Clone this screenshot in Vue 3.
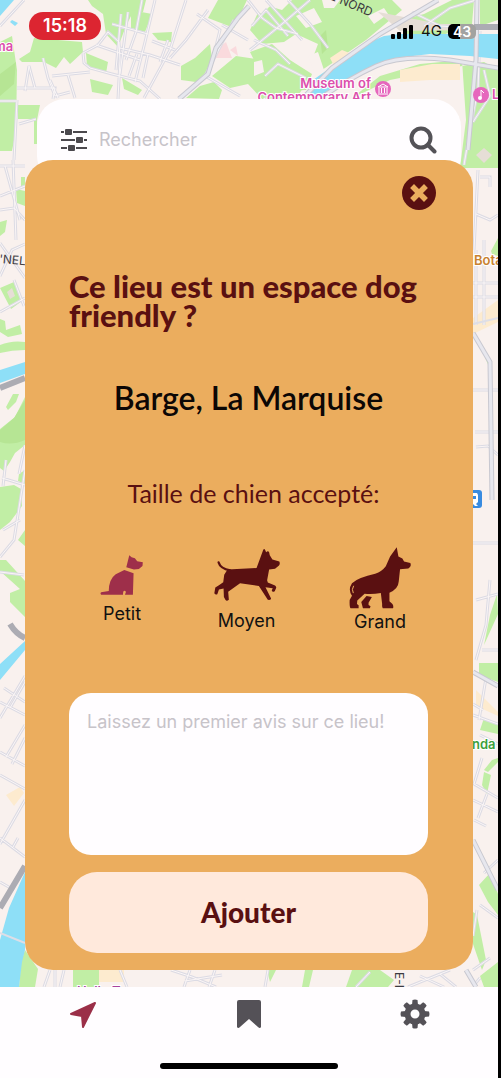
<script setup>
import { ref } from 'vue'

const size = ref('petit')
const review = ref('')
const query = ref('')
const teeth = [0, 45, 90, 135, 180, 225, 270, 315]

const parks = [
  'M88 0H146L143 12 132 14 126 26 118 47 106 34 103 14 92 6Z',
  'M34 38 82 42 83 52 70 64 64 57 56 68 44 62 22 62 19 59 30 52Z',
  'M0 42 12 36 17 70 16 130 12 151H0Z',
  'M18 105H40L37 120V144L34 144V119H18Z',
  'M86 53 108 62 106 73 87 66Z',
  'M90 79 113 85 108 95 92 92Z',
  'M122 78 142 90 138 95 124 89Z',
  'M131 10 152 14 145 32 131 28Z',
  'M152 33 172 32 171 42 158 40Z',
  'M195 58 210 44 213 66 196 82 181 80V66Z',
  'M186 98 200 86 214 82 222 90 219 99Z',
  'M218 0H247L234 28 208 18Z',
  'M212 76 236 56 276 62 308 80 296 99H262L248 84 230 88Z',
  'M250 30 262 4 282 10 292 0H392L402 10 366 40 334 62 322 70 312 60 318 44 296 34 284 42 262 44Z',
  'M250 52 272 44 290 60 312 74 306 90 270 92Z',
  'M402 20 424 14 452 0H474L472 24 440 36 404 38Z',
  'M480 0H498V20L480 26Z',
  'M352 98 380 76 420 64 462 60 466 120 460 168 498 168V70L484 62 440 70 390 80Z',
  'M16 189 25 191V206L17 203Z M21 177 25 177V187L21 186Z',
  'M0 222 7 220 5 232 0 236Z M0 288 14 282 22 301 11 309Z',
  'M0 319 5 321 6 330 20 325 22 334 8 337 0 332Z',
  'M0 345Q12 340 25 342V350Q12 350 0 353Z',
  'M6 407 13 394 19 394 16 402 8 410Z',
  'M0 429 15 417 25 397V445L15 453 10 462 4 471 0 468Z',
  'M0 487 14 485 21 489 22 506 10 522 0 530Z M19 474 25 470V484L18 481Z M18 540 25 530V546Z',
  'M0 560H6L25 581V617L10 602 10 593 20 589 0 571Z',
  'M21 962 25 950 38 969 35 987H19Z',
  'M73 970H99V987H73Z M267 970H276L270 982Z M305 970H313L309 987H302Z',
  'M352 970H380L394 980 388 987H346Z',
  'M491 251 498 238V256L492 254Z M480 345 489 360V367Z',
  'M484 645 490 615 497 594 498 614Z M479 663H498V682L479 675Z',
  'M480 730 484 718 498 724V734Z M482 785 484 772 491 775 487 794Z M484 770 492 760 498 758V762L488 772Z',
  'M479 885 490 873 498 894V915L488 902Z M473 912 477 915 486 960 482 970 473 944Z M480 976 498 962V987H484Z',
]

const streets = [
  'M0 26 24 0M17 88H55L53 99M17 100 14 160M0 101H16M19 124 36 119M25 91 29 66 35 88M43 58 48 78 55 96 70 92M52 76 90 72M50 80 58 98M68 75 75 98',
  'M83 53 98 45 108 32 119 42 120 60 118 99M83 53 84 63 90 68 112 74 140 81 160 99M96 45 140 60M121 14 116 70M128 12 120 74M112 24 148 34M142 0 136 32 126 60M155 0 145 42 135 82M168 40 160 62M186 0 170 50 144 98',
  'M120 48 150 55 180 65M137 54 129 76M148 54 143 78M152 41 175 50M208 10 186 40 170 58M197 14 220 30 210 70M234 20 205 76 240 96M222 25 248 40',
  'M248 0 262 18 276 28 298 34M252 26 266 10 288 36M266 0 302 40M250 50 282 24 310 0M288 0 310 24 328 48M254 40 276 50 290 64M265 76 278 64 306 78',
  'M412 12 440 26 470 28M424 26 450 8 476 0M480 31 478 90 470 130 464 165M484 70 490 96 473 122',
  'M0 166H25M5 166 20 220M0 196 25 186M0 210 14 208 25 220M13 160 16 240M0 243 25 278M0 276 12 250 25 244M0 312 25 298M14 280 24 306',
  'M2 478 25 485M6 460 3 486M25 445 19 474M25 470 14 540 0 557M3 530 20 520',
  'M0 572 24 575M0 718 25 676M4 688 25 702M0 702 25 715M10 708 25 682M0 752 25 766M0 775 25 789M6 757 25 725M12 764 25 738M0 844 25 800M0 838 25 857M13 847 18 838M0 882 14 890',
  'M50 970 44 987M55 970V987M64 970 60 987M120 970 127 987M171 970 192 977 216 987M190 970 184 987M215 970 209 987M185 981 222 975M268 970 265 987M356 987 370 972M408 987 450 970M420 976 444 987M440 974 456 987',
  'M478 170 476 210 474 250M480 177H490V187M476 214 490 220 498 215M473 283H498M476 250V325M484 240V325M473 297H498M473 390H498M475 432H498M476 447 488 446 498 455M473 543H498',
  'M476 600 498 594M476 660 486 625 490 580M482 650H498M473 704 483 710M486 678 479 720M473 715 498 724M480 735 498 744M482 758 474 784 498 798M487 794 478 818M473 800 498 812M474 820 486 826M484 873 498 860M480 905 498 918M473 936 477 910M473 970 490 958M474 985 480 978',
]
</script>

<template>
  <div class="screen">
    <main class="stage">
      <svg class="map" viewBox="0 0 498 987" preserveAspectRatio="xMidYMin slice" aria-hidden="true">
        <rect class="land" width="498" height="987" />
        <path v-for="(d, i) in parks" :key="i" class="park" :d="d" />
        <path class="land" d="M256 0 276 0 262 14 252 10ZM296 16 314 8 322 22 306 28ZM322 0H340L334 8 324 8ZM308 56 318 52 324 70 316 76ZM254 62 262 60 264 72 254 76ZM368 16 384 8 388 14 374 24Z" />
        <path class="sand" d="M330 58 342 50 352 54 334 66ZM400 70 432 64 460 64V80L430 80 400 82ZM473 318 498 300V322L473 334ZM6 795 20 787 24 793 14 806ZM99 970H124V982H99ZM476 690 498 712V716L476 706Z" />
        <path class="blush" d="M218 48 226 42 232 58 214 58ZM230 50 236 46 238 56Z" />
        <path class="grove" d="M0 430 14 418 25 400V440Q12 446 0 442ZM0 74 16 62 14 84 0 96ZM320 36 326 30 328 48 322 54Z" />
        <path class="building" d="M476 155 484 148 492 155 484 163ZM7 292 12 288 15 296 10 299ZM378 12 440 24 470 24 470 30 400 31Z" />
        <path class="casing" :d="streets.join('')" />
        <path class="street" :d="streets.join('')" />
        <path class="water" d="M305 97 313 80 330 68 367 43 384 36 400 34H498V59L470 56 430 54 396 58 368 68 340 87 326 97Z" />
        <path class="water" d="M0 0H14L0 16ZM12 20 18 23 15 26 10 22ZM0 370 25 362V374L0 383ZM0 664 25 641V650L0 680ZM25 872 9 908 0 940V987H19L22 962 25 950Z" />
        <path class="major-edge" d="M306 95 332 68 380 34 438 0M322 97Q350 78 376 66T450 60L498 68M477 0 476 60 468 150M179 99 208 74 216 48 238 18 249 6M473 333 490 362 492 500M473 672 498 686M473 840 498 890M466 970 476 987" />
        <path class="major" d="M306 95 332 68 380 34 438 0M322 97Q350 78 376 66T450 60L498 68M477 0 476 60 468 150M179 99 208 74 216 48 238 18 249 6M473 333 490 362 492 500M473 672 498 686M473 840 498 890M466 970 476 987" />
        <path class="rail" d="M0 388 25 378M10 624Q16 634 25 638M0 908 25 866M474 27H498" />
        <path class="tram" d="M0 933 25 943M473 324 498 318" />
        <g class="place pink">
          <text x="371" y="88" text-anchor="end">Museum of</text>
          <text x="371" y="102" text-anchor="end">Contemporary Art</text>
          <text x="-6" y="51">ma</text>
          <text x="492" y="99">L</text>
          <text class="purple" x="77" y="996">Halle Tony</text>
        </g>
        <text class="place orange" x="474" y="265">Bota</text>
        <text class="place green" x="472" y="749">nda</text>
        <g class="road-name">
          <text transform="translate(329 -1) rotate(23)">E NORD</text>
          <text transform="translate(-1 263) rotate(5)">'NEL</text>
          <text transform="translate(395 972) rotate(90)">E-D</text>
        </g>
        <circle class="pin" cx="383" cy="89" r="8" />
        <path class="pin-mark" d="M378 87 383 84 388 87ZM379 88V93M381.500 88V93M384.500 88V93M387 88V93M378 94H388" />
        <circle class="pin" cx="481" cy="95" r="8" />
        <path class="pin-mark" d="M481 98V90L484 93" />
        <circle cx="480" cy="98" r="2" fill="#fff" />
        <rect x="465" y="490" width="17" height="18" rx="3" fill="#388be0" />
        <path d="M470 493H477L478 495V502L476 504 478 506H475L473 504H470Z" fill="#fff" />
        <path d="M471 496H476V499H471ZM475 501H477" fill="#388be0" />
      </svg>

      <header class="status">
        <time class="clock">15:18</time>
        <div class="signals">
          <svg width="24" height="15" viewBox="0 0 24 15" aria-label="Réseau">
            <rect x="0" y="10" width="4" height="5" rx="1" />
            <rect x="6" y="8" width="4" height="7" rx="1" />
            <rect x="12" y="4" width="4" height="11" rx="1" />
            <rect x="18" y="1" width="4" height="14" rx="1" />
          </svg>
          <span class="network">4G</span>
          <span class="battery">43</span>
        </div>
      </header>

      <form class="search" @submit.prevent>
        <button type="button" class="plain" aria-label="Filtres">
          <svg width="26" height="26" viewBox="0 0 26 26" fill="#4b484d">
            <path d="M0 4H26V6H0ZM0 12H26V14H0ZM0 20H26V22H0Z" />
            <path d="M3 1H12V9H3ZM14 9H23V17H14ZM6 17H15V25H6Z" fill="#fffdff" />
            <rect x="4" y="2" width="7" height="6" rx="1" />
            <rect x="15" y="10" width="7" height="6" rx="1" />
            <rect x="7" y="18" width="7" height="6" rx="1" />
          </svg>
        </button>
        <input v-model="query" type="search" placeholder="Rechercher" aria-label="Rechercher" />
        <button type="submit" class="plain" aria-label="Lancer la recherche">
          <svg width="28" height="28" viewBox="0 0 28 28" fill="none" stroke="#545257" stroke-width="4" stroke-linecap="round">
            <circle cx="12" cy="12" r="9.500" />
            <path d="M19 19 25.500 25.500" />
          </svg>
        </button>
      </form>

      <section class="sheet" role="dialog" aria-labelledby="question">
        <button type="button" class="plain close" aria-label="Fermer">
          <svg width="34" height="34" viewBox="0 0 34 34">
            <circle cx="17" cy="17" r="17" fill="#5a1011" />
            <path d="M12 12 22 22M22 12 12 22" stroke="#ebad5e" stroke-width="5.500" stroke-linecap="square" />
          </svg>
        </button>
        <h1 id="question">Ce lieu est un espace dog friendly ?</h1>
        <h2>Barge, La Marquise</h2>
        <fieldset>
          <legend>Taille de chien accepté:</legend>
          <div class="sizes">
            <label class="size">
              <input v-model="size" type="radio" name="size" value="petit" />
              <svg width="44" height="40" viewBox="48 47 132 121">
                <path d="M136 48 143 54 153 57 160 66 177 69 176 80 165 89 150 91 127 84 130 72ZM121 92 149 102 147 167H123L126 158Q117 149 117 167H51Q47 163 51 160L74 156Q74 120 95 105Z" />
              </svg>
              <span>Petit</span>
            </label>
            <label class="size">
              <input v-model="size" type="radio" name="size" value="moyen" />
              <svg width="66" height="54" viewBox="29 31 200 160">
                <path d="M70 94 158 90 178 35Q181 30 184 35L187 42Q193 36 196 42L198 51 206 64 227 70Q230 78 226 82L214 92 196 94 190 127 192 134 214 143Q219 147 217 151L213 160Q206 164 204 158L207 151 185 148 202 182Q202 188 192 186L165 144 108 136 72 162 74 186Q68 191 64 187L59 178 58 152 44 155 39 169Q34 173 30 166L33 149 44 142 57 133 60 110Z" />
                <path d="M43 73Q48 91 78 97" fill="none" stroke="#5a1011" stroke-width="7" stroke-linecap="round" />
              </svg>
              <span>Moyen</span>
            </label>
            <label class="size tall">
              <input v-model="size" type="radio" name="size" value="grand" />
              <svg width="62" height="62" viewBox="431 16 187 187">
                <path d="M575 17 580 45 592 51 597 60 616 64Q619 72 615 76L610 81 585 83 581 120Q580 142 553 154V180L562 188Q566 194 564 201H533Q530 196 531 188L527 155Q500 160 478 157L456 177 455 188 460 192V201H436Q432 198 433 176L440 163Q427 145 440 125 460 108 510 97 530 90 542 74L555 45ZM484 164 500 167 490 184V191L496 195 494 201H473L468 182Z" />
                <path d="M445 133Q438 144 444 155" fill="none" stroke="#ebad5e" stroke-width="3" />
              </svg>
              <span>Grand</span>
            </label>
          </div>
        </fieldset>
        <textarea v-model="review" placeholder="Laissez un premier avis sur ce lieu!" aria-label="Votre avis"></textarea>
        <button type="button" class="add">Ajouter</button>
      </section>
    </main>

    <nav class="tabs">
      <a href="#carte" aria-label="Carte" aria-current="page">
        <svg width="30" height="30" viewBox="0 0 30 30" fill="#9b2f48" stroke="#9b2f48" stroke-width="2" stroke-linejoin="round">
          <path d="M27 4 15 28 14 17 3 15Z" />
        </svg>
      </a>
      <a href="#favoris" aria-label="Favoris">
        <svg width="30" height="30" viewBox="0 0 30 30" fill="#545157">
          <path d="M5 1H25Q27 1 27 3V28Q26 30 24 28L15 20 6 28Q4 30 3 28V3Q3 1 5 1Z" />
        </svg>
      </a>
      <a href="#reglages" aria-label="Réglages">
        <svg width="30" height="30" viewBox="0 0 30 30" fill="#545157">
          <path v-for="a in teeth" :key="a" d="M12 6 12.500 1Q15 0 17.500 1L18 6Z" :transform="`rotate(${a} 15 15)`" />
          <circle cx="15" cy="15" r="7.500" fill="none" stroke="#545157" stroke-width="6" />
        </svg>
      </a>
      <span class="home-bar"></span>
    </nav>
  </div>
</template>

<style>
html,
body {
  background: #000;
}
</style>

<style scoped>
* {
  box-sizing: border-box;
}
.screen {
  min-height: 100vh;
  display: flex;
  flex-direction: column;
  border-right: 3px solid #000;
  font-family: Inter, "Liberation Sans", sans-serif;
  color: #111;
}
.stage {
  position: relative;
  flex: 1;
  display: flex;
  flex-direction: column;
  overflow: hidden;
  padding-bottom: 17px;
}
.map {
  position: absolute;
  inset: 0;
  width: 100%;
  height: 100%;
}
.land { fill: #f9f1ee; }
.sand { fill: #fdebcf; }
.blush { fill: #fadadd; }
.park { fill: #c1eea5; }
.grove { fill: #b6e594; }
.building { fill: #e6ded6; }
.water { fill: #8edff7; }
.casing, .street, .major-edge, .major, .rail, .tram { fill: none; }
.casing { stroke: #dcdbe4; stroke-width: 3; }
.street { stroke: #fbf6f6; stroke-width: 1; }
.major-edge { stroke: #c8c8d0; stroke-width: 5; }
.major { stroke: #e7e7ee; stroke-width: 3; }
.rail { stroke: #acacb3; stroke-width: 6; }
.tram { stroke: #dedee6; stroke-width: 2; }
.place {
  font-size: 13px;
  font-weight: 600;
  stroke: #fff;
  stroke-width: 2px;
  paint-order: stroke;
}
.pink { fill: #dc4fac; }
.purple { fill: #a8439c; }
.orange { fill: #c9822f; }
.green { fill: #3ba03c; }
.road-name { font-size: 12px; fill: #3c3a40; }
.pin { fill: #e667bd; }
.pin-mark { fill: none; stroke: #fff; stroke-width: 1; }

.status {
  position: relative;
  display: flex;
  justify-content: space-between;
  align-items: flex-start;
  height: 99px;
  padding: 12px 22px 0 29px;
}
.clock {
  width: 72px;
  border-radius: 14px;
  background: #dc2531;
  color: #fff;
  font-size: 18px;
  font-weight: 600;
  line-height: 28px;
  text-align: center;
}
.signals {
  display: flex;
  align-items: center;
  gap: 6px;
  padding-top: 9px;
}
.network {
  font-size: 15px;
  line-height: 20px;
}
.battery {
  width: 28px;
  border-radius: 5px;
  background: linear-gradient(90deg, #000 42%, #a2a2a0 42%);
  color: #fff;
  font-size: 14px;
  font-weight: 600;
  line-height: 15px;
  text-align: center;
}
.search {
  position: relative;
  display: flex;
  align-items: center;
  gap: 12px;
  margin: 0 37px -24px;
  padding: 27px 24px 30px;
  border-radius: 28px;
  background: #fffdff;
}
.search input {
  flex: 1;
  min-width: 0;
  padding: 0;
  border: 0;
  outline: 0;
  background: none;
  font: 18px/28px Inter, sans-serif;
}
.search input::placeholder,
textarea::placeholder {
  color: #c7c3c9;
  opacity: 1;
}
.plain {
  display: flex;
  padding: 0;
  border: 0;
  background: none;
  cursor: pointer;
}
.sheet {
  position: relative;
  flex: 1;
  display: flex;
  flex-direction: column;
  margin: 0 25px;
  padding: 16px 45px 17px 44px;
  border-radius: 28px;
  background: #ebad5e;
}
.close {
  align-self: flex-end;
  margin-right: -8px;
}
h1, h2, legend, .add {
  font-family: Lato, sans-serif;
}
h1 {
  margin: 62px -8px 0 0;
  color: #5a1011;
  font-size: 31px;
  font-weight: 900;
  line-height: 29px;
}
h2 {
  margin: 50px 0 0;
  color: #0c0705;
  font-size: 32px;
  font-weight: 600;
  line-height: 36px;
  text-align: center;
}
fieldset {
  min-width: 0;
  margin: 62px 0 0;
  padding: 0;
  border: 0;
}
legend {
  width: 100%;
  padding: 0 0 0 10px;
  color: #5a1011;
  font-size: 25px;
  line-height: 30px;
  text-align: center;
}
.sizes {
  display: flex;
  justify-content: space-between;
  align-items: center;
  padding: 39px 17px 0 31px;
}
.size {
  position: relative;
  display: flex;
  flex-direction: column;
  align-items: center;
  gap: 8px;
  font-size: 18px;
  line-height: 22px;
  cursor: pointer;
}
.tall {
  gap: 2px;
}
.size input {
  position: absolute;
  inset: 0;
  margin: 0;
  opacity: 0;
}
.size svg {
  fill: #5a1011;
}
.size input:checked + svg {
  fill: #9e2f4a;
}
textarea {
  height: 162px;
  margin-top: auto;
  padding: 17px 18px;
  border: 0;
  border-radius: 22px;
  outline: 0;
  resize: none;
  background: #fffdff;
  font: 18px/24px Inter, sans-serif;
}
.add {
  margin-top: 17px;
  padding: 22px;
  border: 0;
  border-radius: 28px;
  background: #ffe9dc;
  color: #5a1011;
  font-size: 28px;
  font-weight: 900;
  line-height: 37px;
}
.tabs {
  display: grid;
  grid-template-columns: repeat(3, 1fr);
  justify-items: center;
  padding: 12px 0 9px;
  background: #fffdff;
}
.tabs a {
  display: flex;
}
.home-bar {
  grid-column: 1 / -1;
  width: 178px;
  height: 6px;
  margin-top: 34px;
  border-radius: 3px;
  background: #000;
}
</style>
